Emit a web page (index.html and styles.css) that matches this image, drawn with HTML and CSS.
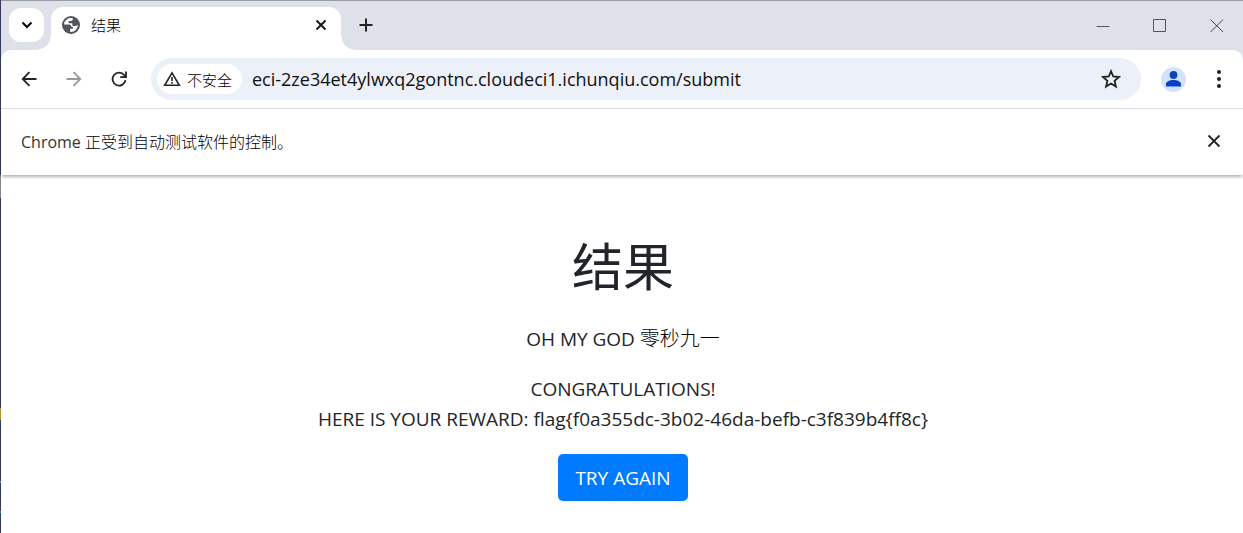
FILE: index.html
```html
<!DOCTYPE html>
<html lang="zh-CN">
<head>
    <meta charset="UTF-8">
    <meta name="viewport" content="width=device-width, initial-scale=1.0">
    <title>结果</title>
    <link rel="stylesheet" href="styles.css">
</head>
<body>
    <div class="window">
        <!-- Tab strip -->
        <header class="tab-strip">
            <button class="tab-search" aria-label="搜索标签页">
                <svg width="12" height="8" viewBox="0 0 12 8"><path d="M1.500 1.500 6 6l4.500-4.500" fill="none" stroke="#000" stroke-width="2"/></svg>
            </button>
            <div class="tab">
                <svg class="favicon" width="18" height="18" viewBox="0 0 18 18">
                    <circle cx="9" cy="9" r="9" fill="#50565e"/>
                    <path d="M10.800 2.200A7.100 7.100 0 0 0 2 8.500h5c1.500 0 2.300.9 2.300 2.200h1.600v2.100H8.200v3.200A7.100 7.100 0 0 0 16 8.600c-.6 1-1.400 1.400-2.500 1.400h-1.600c-1 0-1.600-.6-1.600-1.600V7.200H6.600V4.900h2.500c1 0 1.700-.8 1.700-1.700z" fill="#fff"/>
                </svg>
                <span class="tab-title">结果</span>
                <button class="tab-close" aria-label="关闭标签页">
                    <svg width="12" height="12" viewBox="0 0 12 12"><path d="m1.500 1.500 9 9m0-9-9 9" stroke="#1b1b1b" stroke-width="2"/></svg>
                </button>
            </div>
            <button class="new-tab" aria-label="新标签页">
                <svg width="14" height="14" viewBox="0 0 14 14"><path d="M7 .5v13M.5 7h13" stroke="#222" stroke-width="2"/></svg>
            </button>
            <div class="window-controls">
                <button aria-label="最小化"><svg width="14" height="14" viewBox="0 0 14 14"><path d="M.5 7.500h13" stroke="#555"/></svg></button>
                <button aria-label="最大化"><svg width="14" height="14" viewBox="0 0 14 14"><path d="M.5.5h12v12H.5z" fill="none" stroke="#555"/></svg></button>
                <button aria-label="关闭"><svg width="14" height="14" viewBox="0 0 14 14"><path d="m.5.5 12.500 12.500M13 .5.5 13" stroke="#444"/></svg></button>
            </div>
        </header>

        <!-- Toolbar -->
        <nav class="toolbar">
            <button class="nav-btn" aria-label="后退">
                <svg width="16" height="16" viewBox="0 0 16 16"><path d="M15.500 8H2M8.500 1.200 1.700 8l6.800 6.800" fill="none" stroke="#222" stroke-width="1.800"/></svg>
            </button>
            <button class="nav-btn" aria-label="前进" disabled>
                <svg width="16" height="16" viewBox="0 0 16 16"><path d="M.5 8H14M7.500 1.200 14.300 8l-6.800 6.800" fill="none" stroke="#999" stroke-width="1.800"/></svg>
            </button>
            <button class="nav-btn" aria-label="重新加载">
                <svg width="16" height="16" viewBox="0 0 16 16"><path d="M14.500 9.200A6.500 6.500 0 1 1 13.300 4.200L14.600 6M15 .5v5.700H9.200" fill="none" stroke="#222" stroke-width="1.800"/></svg>
            </button>
            <div class="address-bar">
                <button class="security-chip">
                    <svg width="18" height="16" viewBox="0 0 18 16"><path d="M9 1.800 16.300 14.300H1.700z" fill="none" stroke="#222" stroke-width="1.600"/><path d="M9 6v4M9 11v1.800" stroke="#222" stroke-width="1.600"/></svg>
                    <span class="zh">不安全</span>
                </button>
                <input class="url" type="text" aria-label="地址" spellcheck="false" value="eci-2ze34et4ylwxq2gontnc.cloudeci1.ichunqiu.com/submit">
                <button class="star" aria-label="收藏">
                    <svg width="20" height="20" viewBox="0 0 20 20"><path d="m10 2.200 2.200 5.300 5.800.5-4.400 3.800 1.300 5.700-4.900-3-4.900 3 1.300-5.700L2 8l5.800-.5z" fill="none" stroke="#222" stroke-width="1.800"/></svg>
                </button>
            </div>
            <button class="avatar" aria-label="个人资料">
                <svg width="15" height="16" viewBox="0 0 15 16"><circle cx="7.500" cy="4" r="3.900" fill="#0842c0"/><path d="M0 15.500V13c0-2.500 4.200-4 7.500-4s7.500 1.500 7.500 4v2.500z" fill="#0842c0"/></svg>
            </button>
            <button class="menu-btn" aria-label="菜单">
                <svg width="4" height="18" viewBox="0 0 4 18"><circle cx="2" cy="2" r="2" fill="#222"/><circle cx="2" cy="9" r="2" fill="#222"/><circle cx="2" cy="16" r="2" fill="#222"/></svg>
            </button>
        </nav>

        <!-- Automation notice -->
        <div class="infobar">
            <p>Chrome <span class="zh">正受到自动测试软件的控制。</span></p>
            <button aria-label="关闭提示">
                <svg width="14" height="14" viewBox="0 0 14 14"><path d="m1.500 1.500 11 11m0-11-11 11" stroke="#222" stroke-width="1.800"/></svg>
            </button>
        </div>

        <!-- Page content -->
        <main class="content">
            <h1>结果</h1>
            <p>OH MY GOD <span class="zh result">零秒九一</span></p>
            <p>CONGRATULATIONS!<br>HERE IS YOUR REWARD: flag{f0a355dc-3b02-46da-befb-c3f839b4ff8c}</p>
            <a class="btn" href="#">TRY AGAIN</a>
        </main>
    </div>
</body>
</html>
```
FILE: styles.css
```css
/* Basic reset */
* {
    margin: 0;
    padding: 0;
    box-sizing: border-box;
}
body {
    font-family: "Open Sans", "Noto Sans CJK SC", sans-serif;
    background-color: #fff;
    color: #212529;
}
button {
    display: flex;
    align-items: center;
    justify-content: center;
    flex-shrink: 0;
    border: none;
    background: none;
    font-family: inherit;
    cursor: pointer;
}
.zh {
    font-weight: 300;
    color: #000;
}
.window {
    display: flex;
    flex-direction: column;
    min-height: 100vh;
    background-color: #dee1e9;
    /* Sliver of the desktop behind the window */
    border-left: 1px solid #34385a;
    border-image: linear-gradient(#34385a 175px, #85868c 175px 198px, #34385a 198px 407px, #b8902f 407px 419px, #34385a 419px 480px, #4c9ab0 480px 482px, #34385a 482px 510px, #4c9ab0 510px 512px, #34385a 512px) 1;
}
/* Tab strip */
.tab-strip {
    display: flex;
    height: 50px;
    padding: 6px 0 0 8px;
    border-top: 1px solid #999ca3;
}
.tab-search {
    width: 35px;
    height: 34px;
    margin-top: 1px;
    border-radius: 12px;
    background-color: #fff;
}
.tab {
    position: relative;
    display: flex;
    align-items: center;
    width: 290px;
    margin-left: 7px;
    padding: 0 14px 7px 11px;
    background-color: #fff;
    border-radius: 12px 12px 0 0;
}
/* Curved feet of the active tab */
.tab::before,
.tab::after {
    content: "";
    position: absolute;
    bottom: 0;
    width: 14px;
    height: 14px;
}
.tab::before {
    right: 100%;
    background: radial-gradient(circle at 0 0, transparent 13px, #fff 14px);
}
.tab::after {
    left: 100%;
    background: radial-gradient(circle at 100% 0, transparent 13px, #fff 14px);
}
.tab-title {
    flex: 1;
    margin-left: 11px;
    font-size: 15px;
    font-weight: 300;
    line-height: 20px;
    color: #000;
}
.new-tab {
    width: 34px;
    height: 36px;
    margin-left: 8px;
}
.window-controls {
    display: flex;
    gap: 5px;
    height: 38px;
    margin-left: auto;
}
.window-controls button {
    width: 52px;
}
/* Toolbar */
.toolbar {
    display: flex;
    align-items: center;
    height: 59px;
    padding: 0 10px 0 5px;
    background-color: #fff;
    border-bottom: 1px solid #dcdde0;
    border-radius: 10px 10px 0 0;
}
.nav-btn {
    width: 45px;
    height: 42px;
}
.address-bar {
    flex: 1;
    display: flex;
    align-items: center;
    height: 42px;
    margin-left: 10px;
    padding: 0 20px 0 6px;
    border-radius: 21px;
    background-color: #ecf0f9;
}
.security-chip {
    gap: 6px;
    height: 30px;
    padding: 0 10px 0 6px;
    border-radius: 15px;
    background-color: #fff;
    font-size: 15px;
}
.url {
    flex: 1;
    min-width: 0;
    margin: 0 10px;
    border: none;
    outline: none;
    background: none;
    font-family: inherit;
    font-size: 18px;
    color: #111;
}
.avatar {
    width: 25px;
    height: 25px;
    margin: 0 19px 0 20px;
    border-radius: 50%;
    background-color: #d3e3fd;
}
.menu-btn {
    width: 28px;
    height: 42px;
}
/* Infobar */
.infobar {
    display: flex;
    align-items: center;
    justify-content: space-between;
    height: 66px;
    padding: 0 22px 2px 20px;
    background-color: #fff;
    font-size: 16px;
    color: #333;
    box-shadow: 0 3px 3px -1px rgba(0, 0, 0, 0.3);
    z-index: 1;
}
/* Page content */
.content {
    flex: 1;
    padding: 61px 18px 32px 20px;
    background-color: #fff;
    text-align: center;
    font-size: 19px;
    line-height: 30px;
}
.content h1 {
    margin-bottom: 28px;
    font-size: 51px;
    font-weight: 400;
    line-height: 60px;
}
.content p {
    margin-bottom: 20px;
}
.result {
    font-size: 20px;
}
.btn {
    display: inline-block;
    padding: 9px 17px 8px;
    border-radius: 5px;
    background-color: #007bff;
    color: #fff;
    text-decoration: none;
}
.btn:hover {
    background-color: #0069d9;
}
```
